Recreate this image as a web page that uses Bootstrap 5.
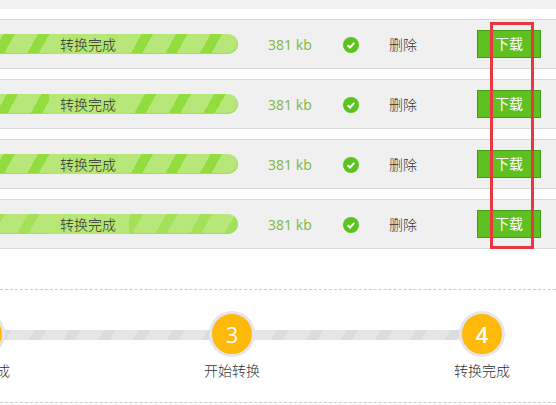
<!DOCTYPE html>
<html lang="zh">
<head>
<meta charset="utf-8">
<title>转换完成</title>
<link rel="stylesheet" href="https://cdn.jsdelivr.net/npm/bootstrap@5.3.0/dist/css/bootstrap.min.css">
<style>
html,body{background:#fff;overflow:hidden;}
body{font-family:"Noto Sans","Noto Sans CJK SC",sans-serif;font-size:14px;color:#333;width:556px;height:405px;}
.top-strip{height:9px;background:#f2f2f2;}
.file-list{position:relative;margin-top:10px;gap:10px;}
.file-row{height:50px;background:#f0f0f0;border-top:1px solid #dcdcdc;border-bottom:1px solid #dcdcdc;}
.conv-bar{--p:3px;width:238px;height:20px;border-radius:0 10px 10px 0;
  background:repeating-linear-gradient(119deg,#b7e778 0,#b7e778 var(--p),#92dc40 var(--p),#92dc40 calc(var(--p) + 10px),#b7e778 calc(var(--p) + 10px),#b7e778 30.2px);
  box-shadow:inset -1px -1px 0 #a5dc66;}
.conv-bar.shift-a{--p:6px;}
.conv-bar.shift-b{background:repeating-linear-gradient(119deg,#a3e15a 0,#a3e15a 4.3px,#b7e778 4.3px,#b7e778 24.5px,#a3e15a 24.5px,#a3e15a 30.2px);}
.conv-label{margin-left:49px;width:80px;height:20px;padding-left:11px;line-height:21px;color:#2e2e2e;font-weight:300;background:rgba(183,231,120,.88);}
.file-size{margin-left:30px;width:75px;color:#84bb47;font-size:14px;}
.ok-icon{width:16px;height:16px;flex:none;margin-top:2px;}
.del-link{margin-left:30px;width:88px;color:#333;font-weight:300;padding-top:1px;}
.get-btn{width:64px;height:28px;padding:0;background:#5fc021;border:1px solid #409c18;border-radius:0;color:#fff;font-size:14px;line-height:26px;}
.get-btn:hover{background:#5fc021;border-color:#409c18;color:#fff;}
.red-frame{position:absolute;left:490px;top:3px;width:44px;height:227px;border:3px solid #e8383f;pointer-events:none;}
.step-zone{position:relative;margin-top:40px;height:114px;border-top:1px dashed #ccc;border-bottom:1px dashed #ccc;padding-top:21px;}
.step-track{position:absolute;left:0;top:40px;width:482px;height:10px;
  background:repeating-linear-gradient(120deg,#dcdcdc 0,#dcdcdc 10px,#e6e6e6 10px,#e6e6e6 30px);}
.step-row{position:relative;margin-left:-143px;width:750px;}
.step-cell{width:250px;}
.step-dot{width:46px;height:46px;border-radius:50%;background:#ffb90b;border:3px solid #e4e6eb;color:#fff;font-family:"Open Sans",sans-serif;font-size:22px;line-height:1;}
.step-label{margin-top:4px;color:#2e2e2e;line-height:20px;font-weight:300;}
</style>
</head>
<body>
<div class="top-strip"></div>
<div class="file-list d-flex flex-column">
  <div class="file-row d-flex align-items-center">
    <div class="conv-bar"><div class="conv-label">转换完成</div></div>
    <div class="file-size">381 kb</div>
    <svg class="ok-icon" viewBox="0 0 16 16"><circle cx="8" cy="8" r="8" fill="#5cc21f"/><path d="M4.6 8.2l2.4 2.3 4.3-4.6" fill="none" stroke="#fff" stroke-width="2"/></svg>
    <div class="del-link">删除</div>
    <button class="btn get-btn" type="button">下载</button>
  </div>
  <div class="file-row d-flex align-items-center">
    <div class="conv-bar shift-a"><div class="conv-label">转换完成</div></div>
    <div class="file-size">381 kb</div>
    <svg class="ok-icon" viewBox="0 0 16 16"><circle cx="8" cy="8" r="8" fill="#5cc21f"/><path d="M4.6 8.2l2.4 2.3 4.3-4.6" fill="none" stroke="#fff" stroke-width="2"/></svg>
    <div class="del-link">删除</div>
    <button class="btn get-btn" type="button">下载</button>
  </div>
  <div class="file-row d-flex align-items-center">
    <div class="conv-bar"><div class="conv-label">转换完成</div></div>
    <div class="file-size">381 kb</div>
    <svg class="ok-icon" viewBox="0 0 16 16"><circle cx="8" cy="8" r="8" fill="#5cc21f"/><path d="M4.6 8.2l2.4 2.3 4.3-4.6" fill="none" stroke="#fff" stroke-width="2"/></svg>
    <div class="del-link">删除</div>
    <button class="btn get-btn" type="button">下载</button>
  </div>
  <div class="file-row d-flex align-items-center">
    <div class="conv-bar shift-b"><div class="conv-label">转换完成</div></div>
    <div class="file-size">381 kb</div>
    <svg class="ok-icon" viewBox="0 0 16 16"><circle cx="8" cy="8" r="8" fill="#5cc21f"/><path d="M4.6 8.2l2.4 2.3 4.3-4.6" fill="none" stroke="#fff" stroke-width="2"/></svg>
    <div class="del-link">删除</div>
    <button class="btn get-btn" type="button">下载</button>
  </div>
  <div class="red-frame"></div>
</div>
<div class="step-zone">
  <div class="step-track"></div>
  <div class="step-row d-flex">
    <div class="step-cell d-flex flex-column align-items-center">
      <div class="step-dot d-flex align-items-center justify-content-center">2</div>
      <div class="step-label">上传完成</div>
    </div>
    <div class="step-cell d-flex flex-column align-items-center">
      <div class="step-dot d-flex align-items-center justify-content-center">3</div>
      <div class="step-label">开始转换</div>
    </div>
    <div class="step-cell d-flex flex-column align-items-center">
      <div class="step-dot d-flex align-items-center justify-content-center fw-semibold">4</div>
      <div class="step-label">转换完成</div>
    </div>
  </div>
</div>
<script src="https://cdn.jsdelivr.net/npm/bootstrap@5.3.0/dist/js/bootstrap.bundle.min.js"></script>
</body>
</html>
